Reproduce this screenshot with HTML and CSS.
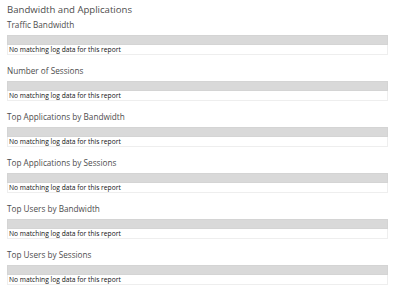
FILE: index.html
```html
<!DOCTYPE html>
<html lang="en">
<head>
  <meta charset="UTF-8">
  <title>Bandwidth and Applications</title>
  <link rel="stylesheet" href="styles.css">
</head>
<body>
<div class="page">
  <h1 class="page-title">Bandwidth and Applications</h1>

  <div class="report">
    <h2 class="report-title">Traffic Bandwidth</h2>
    <div class="report-bar"></div>
    <div class="report-empty">No matching log data for this report</div>
  </div>

  <div class="report">
    <h2 class="report-title">Number of Sessions</h2>
    <div class="report-bar"></div>
    <div class="report-empty">No matching log data for this report</div>
  </div>

  <div class="report">
    <h2 class="report-title">Top Applications by Bandwidth</h2>
    <div class="report-bar"></div>
    <div class="report-empty">No matching log data for this report</div>
  </div>

  <div class="report">
    <h2 class="report-title">Top Applications by Sessions</h2>
    <div class="report-bar"></div>
    <div class="report-empty">No matching log data for this report</div>
  </div>

  <div class="report">
    <h2 class="report-title">Top Users by Bandwidth</h2>
    <div class="report-bar"></div>
    <div class="report-empty">No matching log data for this report</div>
  </div>

  <div class="report">
    <h2 class="report-title">Top Users by Sessions</h2>
    <div class="report-bar"></div>
    <div class="report-empty">No matching log data for this report</div>
  </div>
</div>
</body>
</html>
```

FILE: styles.css
```css
* {
  margin: 0;
  padding: 0;
  box-sizing: border-box;
}

body {
  font-family: 'Open Sans', sans-serif;
  background: #fff;
  color: #555;
}

.page {
  padding: 3px 12px 0 7px;
}

.page-title {
  font-size: 9.6px;
  font-weight: 400;
  line-height: 14px;
  color: #4d4d4d;
}

.report {
  padding-top: 2px;
  margin-bottom: 8px;
}

.report-title {
  font-size: 8.2px;
  font-weight: 400;
  line-height: 11px;
  color: #4d4d4d;
  margin-bottom: 5px;
}

.report-bar {
  height: 10px;
  background: #d9d9d9;
  border: 1px solid #d4d4d4;
}

.report-empty {
  height: 10px;
  font-size: 6.7px;
  line-height: 9px;
  color: #111;
  padding-left: 1px;
  border: 1px solid #eee;
  border-top: none;
}
```
